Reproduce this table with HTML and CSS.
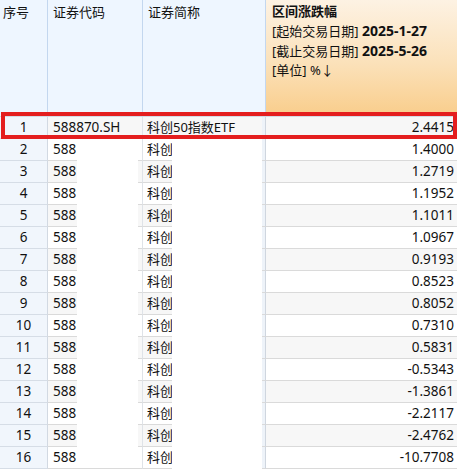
FILE: index.html
```html
<!DOCTYPE html>
<html lang="zh-CN">
<head>
<meta charset="utf-8">
<title>区间涨跌幅</title>
<link rel="stylesheet" href="styles.css">
</head>
<body>
<div class="sheet">
  <div class="grid">
    <div class="hd hd-idx">序号</div>
    <div class="hd hd-code">证券代码</div>
    <div class="hd hd-name">证券简称</div>
    <div class="hd hd-val">
      <div class="b">区间涨跌幅</div>
      <div>[起始交易日期] <span class="b date">2025-1-27</span></div>
      <div>[截止交易日期] <span class="b date">2025-5-26</span></div>
      <div>[单位] %↓</div>
    </div>

    <div class="c idx odd">1</div><div class="c code odd">588870.SH</div><div class="c name odd">科创50指数ETF</div><div class="c val odd">2.4415</div>
    <div class="c idx">2</div><div class="c code">588</div><div class="c name">科创</div><div class="c val">1.4000</div>
    <div class="c idx odd">3</div><div class="c code odd">588</div><div class="c name odd">科创</div><div class="c val odd">1.2719</div>
    <div class="c idx">4</div><div class="c code">588</div><div class="c name">科创</div><div class="c val">1.1952</div>
    <div class="c idx odd">5</div><div class="c code odd">588</div><div class="c name odd">科创</div><div class="c val odd">1.1011</div>
    <div class="c idx">6</div><div class="c code">588</div><div class="c name">科创</div><div class="c val">1.0967</div>
    <div class="c idx odd">7</div><div class="c code odd">588</div><div class="c name odd">科创</div><div class="c val odd">0.9193</div>
    <div class="c idx">8</div><div class="c code">588</div><div class="c name">科创</div><div class="c val">0.8523</div>
    <div class="c idx odd">9</div><div class="c code odd">588</div><div class="c name odd">科创</div><div class="c val odd">0.8052</div>
    <div class="c idx">10</div><div class="c code">588</div><div class="c name">科创</div><div class="c val">0.7310</div>
    <div class="c idx odd">11</div><div class="c code odd">588</div><div class="c name odd">科创</div><div class="c val odd">0.5831</div>
    <div class="c idx">12</div><div class="c code">588</div><div class="c name">科创</div><div class="c val">-0.5343</div>
    <div class="c idx odd">13</div><div class="c code odd">588</div><div class="c name odd">科创</div><div class="c val odd">-1.3861</div>
    <div class="c idx">14</div><div class="c code">588</div><div class="c name">科创</div><div class="c val">-2.2117</div>
    <div class="c idx odd">15</div><div class="c code odd">588</div><div class="c name odd">科创</div><div class="c val odd">-2.4762</div>
    <div class="c idx">16</div><div class="c code">588</div><div class="c name">科创</div><div class="c val">-10.7708</div>
  </div>
  <div class="mask mask-code"></div>
  <div class="mask mask-name"></div>
  <div class="highlight"></div>
</div>
</body>
</html>
```
FILE: styles.css
```css
html, body {
  margin: 0;
  padding: 0;
  background: #ffffff;
}
body {
  font-family: "Noto Sans", "Noto Sans CJK SC", sans-serif;
  font-size: 13px;
  color: #111111;
}
.sheet {
  position: relative;
  width: 462px;
  height: 469px;
  overflow: hidden;
}
.grid {
  display: grid;
  grid-template-columns: 48px 95px 123px 191px;
  grid-auto-rows: 22px;
  grid-template-rows: 117px;
  width: 457px;
}
.hd {
  background: #eef6ff;
  border-right: 1px solid #c3d7ef;
  border-bottom: 1px solid #d3dbe5;
  box-sizing: border-box;
  line-height: 19px;
  padding-top: 3px;
  white-space: nowrap;
}
.hd-idx { padding-left: 3px; }
.hd-code { padding-left: 5px; }
.hd-name { padding-left: 5px; }
.hd-val {
  background: linear-gradient(to bottom, #fdf2e3 0%, #fbe1b9 55%, #f9cd8b 100%);
  border-right: none;
  padding-left: 6px;
  padding-top: 2px;
}
.b { font-weight: bold; }
.date { font-size: 14px; }

.c {
  box-sizing: border-box;
  height: 22px;
  line-height: 21px;
  font-size: 13.5px;
  border-bottom: 1px solid #dadada;
  background: #ffffff;
  white-space: nowrap;
  overflow: hidden;
}
.c.odd { background: #f7f7f7; }
.idx, .idx.odd {
  background: #f1f6fc;
  text-align: center;
  border-right: 1px solid #d2d9e2;
  border-bottom-color: #d6dde6;
}
.code {
  padding-left: 5px;
  border-right: 1px solid #dfe3e8;
}
.name {
  padding-left: 4px;
  font-size: 13px;
  border-right: 1px solid #cfd6df;
  box-shadow: inset -3px 0 0 #eef3f9;
}
.val {
  text-align: right;
  padding-right: 3px;
}

.mask {
  position: absolute;
  background: #ffffff;
}
.mask-code {
  left: 77px;
  top: 139px;
  width: 61px;
  height: 326px;
}
.mask-name {
  left: 172px;
  top: 139px;
  width: 90px;
  height: 330px;
}
.highlight {
  position: absolute;
  left: 1px;
  top: 112px;
  width: 456px;
  height: 27px;
  box-sizing: border-box;
  border: 4px solid #e41e1e;
}
```
